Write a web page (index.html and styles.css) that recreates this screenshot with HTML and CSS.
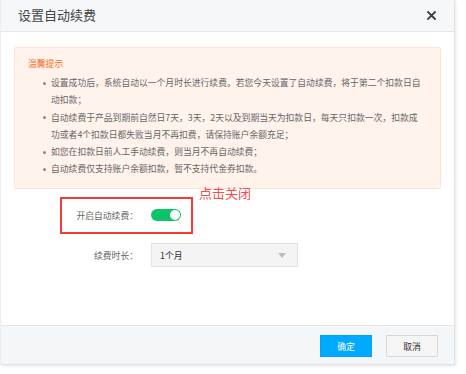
FILE: index.html
```html
<!DOCTYPE html>
<html lang="zh-CN">
<head>
<meta charset="utf-8">
<title>设置自动续费</title>
<link rel="stylesheet" href="styles.css">
</head>
<body>
<div class="dialog">
  <div class="dialog-header">
    <span class="dialog-title">设置自动续费</span>
    <svg class="close" width="9" height="9" viewBox="0 0 9 9"><path d="M1 1L8 8M8 1L1 8" stroke="#3c3c3c" stroke-width="1.8" stroke-linecap="square"/></svg>
  </div>
  <div class="dialog-body">
    <div class="notice">
      <div class="notice-title">温馨提示</div>
      <ul class="notice-list">
        <li>设置成功后，系统自动以一个月时长进行续费。若您今天设置了自动续费，将于第二个扣款日自动扣款；</li>
        <li>自动续费于产品到期前自然日7天，3天，2天以及到期当天为扣款日，每天只扣款一次，扣款成功或者4个扣款日都失败当月不再扣费，请保持账户余额充足；</li>
        <li>如您在扣款日前人工手动续费，则当月不再自动续费；</li>
        <li>自动续费仅支持账户余额扣款，暂不支持代金券扣款。</li>
      </ul>
    </div>
    <div class="form">
      <div class="annotation-box"></div>
      <div class="annotation-text">点击关闭</div>
      <div class="form-row first">
        <label class="form-label">开启自动续费：</label>
        <div class="switch"><span class="knob"></span></div>
      </div>
      <div class="form-row">
        <label class="form-label">续费时长：</label>
        <div class="select">
          <span>1个月</span>
          <svg class="caret" width="8" height="5" viewBox="0 0 8 5"><path d="M0 0H8L4 5Z" fill="#bdbdbd"/></svg>
        </div>
      </div>
    </div>
  </div>
  <div class="dialog-footer">
    <button class="btn btn-primary">确定</button>
    <button class="btn btn-default">取消</button>
  </div>
</div>
</body>
</html>
```
FILE: styles.css
```css
* { box-sizing: border-box; }
html, body {
  margin: 0;
  padding: 0;
  background: #ffffff;
}
body {
  font-family: "Noto Sans CJK SC", "Noto Sans", sans-serif;
  color: #333;
  width: 466px;
  height: 374px;
  overflow: hidden;
}
.dialog {
  width: 455px;
  height: 365px;
  display: flex;
  flex-direction: column;
  background: #fff;
  border-right: 1px solid #e2e5e8;
  border-bottom: 1px solid #e2e5e8;
  border-left: 1px solid #eceef0;
  box-shadow: 1px 1px 3px rgba(0,0,0,0.10);
}
.dialog-header {
  height: 32px;
  flex: none;
  background: #f5f7f9;
  border-bottom: 1px solid #e5e8eb;
  display: flex;
  align-items: center;
  justify-content: space-between;
  padding: 0 18px 1px 17px;
}
.dialog-title {
  font-size: 13px;
  line-height: 18px;
  color: #444;
}
.close { display: block; }
.dialog-body {
  flex: 1;
  padding: 15px 13px 0 13px;
}
.notice {
  height: 142px;
  background: #fff3ec;
  border: 1px solid #fbe4d6;
  border-radius: 2px;
  padding: 7px 16px 0 13px;
  font-size: 8.8px;
  line-height: 17.2px;
}
.notice-title {
  color: #ff6a1a;
}
.notice-list {
  margin: 2px 0 0 0;
  padding: 0 0 0 23px;
  color: #666;
  width: 395px;
}
.notice-list li {
  list-style: none;
  position: relative;
}
.notice-list li::before {
  content: "";
  position: absolute;
  left: -8px;
  top: 7.5px;
  width: 3px;
  height: 3px;
  border-radius: 50%;
  background: #888;
}
.form {
  position: relative;
  padding-top: 14px;
  padding-left: 43px;
}
.form-row {
  display: flex;
  align-items: center;
  gap: 13px;
  height: 24px;
  margin-bottom: 16px;
}
.form-label {
  width: 81px;
  text-align: right;
  font-size: 8.8px;
  color: #666;
  white-space: nowrap;
}
.switch {
  width: 30px;
  height: 12px;
  border-radius: 6px;
  background: #0dc36a;
  position: relative;
}
.knob {
  position: absolute;
  right: 1px;
  top: 1px;
  width: 10px;
  height: 10px;
  border-radius: 50%;
  background: #fff;
}
.select {
  width: 147px;
  height: 24px;
  background: #f4f4f4;
  border: 1px solid #e2e2e2;
  display: flex;
  align-items: center;
  justify-content: space-between;
  padding: 0 11px 0 8px;
  font-size: 8.8px;
  color: #333;
}
.caret { display: block; }
.annotation-box {
  position: absolute;
  left: 46px;
  top: 8px;
  width: 133px;
  height: 37px;
  border: 2px solid #f53a3a;
}
.annotation-text {
  position: absolute;
  left: 185px;
  top: -5px;
  font-size: 13px;
  line-height: 18px;
  color: #f54a4a;
}
.dialog-footer {
  height: 39px;
  flex: none;
  background: #f4f7f9;
  border-top: 1px solid #e6e9ec;
  display: flex;
  justify-content: flex-end;
  align-items: flex-start;
  gap: 14px;
  padding: 9px 16px 0 0;
}
.btn {
  width: 52px;
  height: 22px;
  font-family: inherit;
  font-size: 8.8px;
  padding: 0;
  border-radius: 0;
  cursor: pointer;
}
.btn-primary {
  background: #00aaff;
  border: 1px solid #00a4f5;
  color: #fff;
}
.btn-default {
  background: #f5f5f5;
  border: 1px solid #d9d9d9;
  color: #333;
}
```
